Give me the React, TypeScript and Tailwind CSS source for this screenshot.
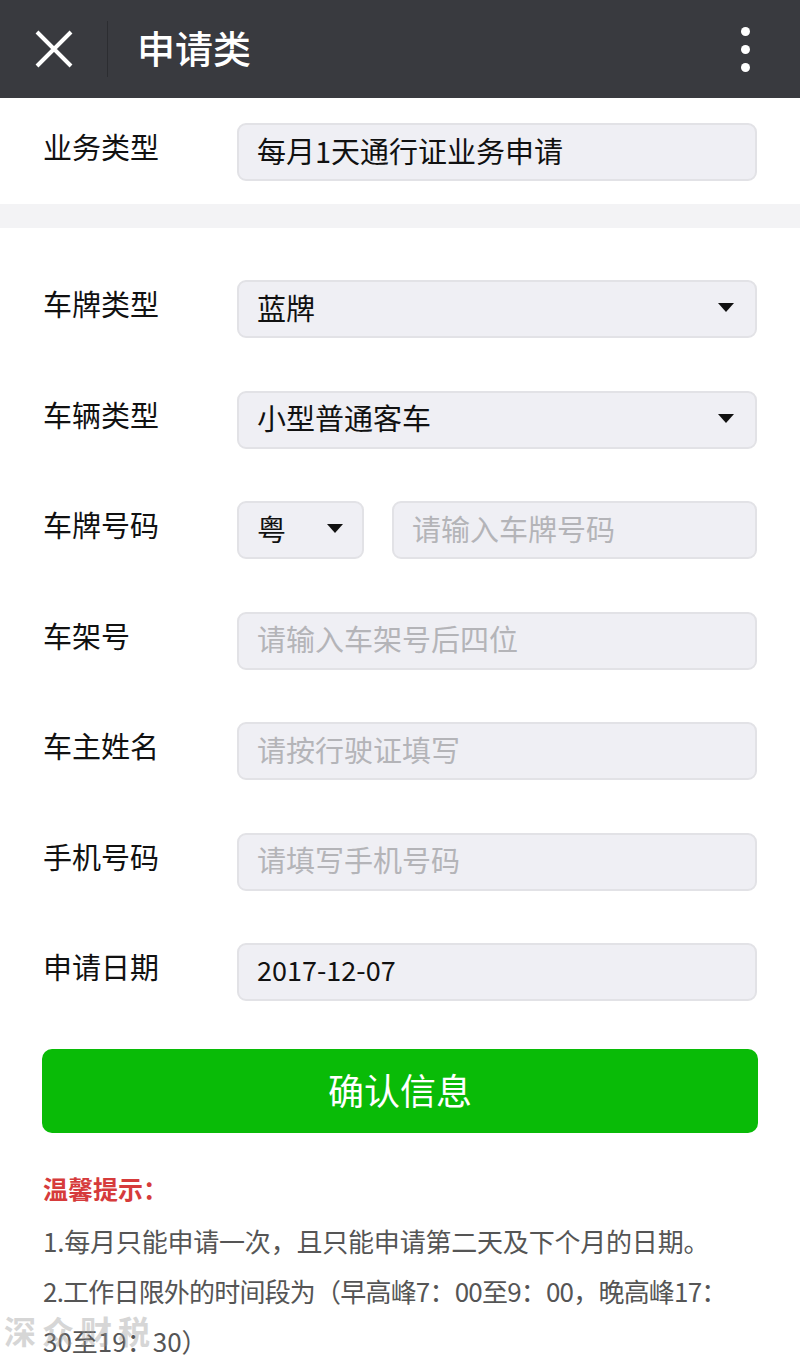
import React from 'react';

const FONT = { fontFamily: '"Noto Sans CJK SC", "Noto Sans", sans-serif' };

const Caret: React.FC = () => (
  <svg width="16" height="9" viewBox="0 0 16 9" className="shrink-0">
    <path d="M0 0h16L8 9z" fill="#111" />
  </svg>
);

const Box: React.FC<{ children: React.ReactNode; className?: string }> = ({ children, className = '' }) => (
  <div
    className={`h-[58px] flex items-center rounded-[9px] border-2 border-[#e2e2e6] bg-[#efeff4] px-[18px] pb-[3px] ${className}`}
  >
    {children}
  </div>
);

const Row: React.FC<{ label: string; children: React.ReactNode }> = ({ label, children }) => (
  <div className="flex items-center">
    <div className="w-[194px] shrink-0 pb-[10px] text-[29px] text-[#111]">{label}</div>
    <div className="flex-1 flex">{children}</div>
  </div>
);

const Placeholder: React.FC<{ text: string }> = ({ text }) => (
  <span className="text-[29px] text-[#b4b4b8]">{text}</span>
);

export default function App() {
  return (
    <div className="relative w-[800px] min-h-[1365px] bg-white overflow-hidden" style={FONT}>
      {/* header */}
      <div className="h-[98px] bg-[#393a3f] flex items-center">
        <div className="w-[107px] flex justify-center">
          <svg width="38" height="38" viewBox="0 0 38 38">
            <path d="M2 2L36 36M36 2L2 36" stroke="#fff" strokeWidth="4" />
          </svg>
        </div>
        <div className="w-px h-[56px] bg-[#2c2d31]" />
        <div className="ml-[29px] text-[38px] font-medium text-white pb-[6px]">申请类</div>
        <div className="ml-auto mr-[50px] flex flex-col gap-[9px]">
          <span className="block w-[9px] h-[9px] rounded-full bg-white" />
          <span className="block w-[9px] h-[9px] rounded-full bg-white" />
          <span className="block w-[9px] h-[9px] rounded-full bg-white" />
        </div>
      </div>

      {/* business type */}
      <div className="px-[43px] pt-[25px] pb-[23px]">
        <Row label="业务类型">
          <Box className="flex-1">
            <span className="text-[29px] text-[#111]">每月1天通行证业务申请</span>
          </Box>
        </Row>
      </div>
      <div className="h-[24px] bg-[#f3f3f5]" />

      {/* form */}
      <div className="px-[43px] pt-[52px] flex flex-col gap-[52.5px]">
        <Row label="车牌类型">
          <Box className="flex-1 justify-between pr-[21px]">
            <span className="text-[29px] text-[#111]">蓝牌</span>
            <Caret />
          </Box>
        </Row>
        <Row label="车辆类型">
          <Box className="flex-1 justify-between pr-[21px]">
            <span className="text-[29px] text-[#111]">小型普通客车</span>
            <Caret />
          </Box>
        </Row>
        <Row label="车牌号码">
          <div className="flex-1 flex gap-[28px]">
            <Box className="w-[127px] justify-between pr-[19px]">
              <span className="text-[29px] text-[#111]">粤</span>
              <Caret />
            </Box>
            <Box className="flex-1">
              <Placeholder text="请输入车牌号码" />
            </Box>
          </div>
        </Row>
        <Row label="车架号">
          <Box className="flex-1">
            <Placeholder text="请输入车架号后四位" />
          </Box>
        </Row>
        <Row label="车主姓名">
          <Box className="flex-1">
            <Placeholder text="请按行驶证填写" />
          </Box>
        </Row>
        <Row label="手机号码">
          <Box className="flex-1">
            <Placeholder text="请填写手机号码" />
          </Box>
        </Row>
        <Row label="申请日期">
          <Box className="flex-1">
            <span className="text-[27px] text-[#111]">2017-12-07</span>
          </Box>
        </Row>
      </div>

      <div className="px-[42px] pt-[48px]">
        <button className="w-full h-[84px] rounded-[10px] bg-[#09bb07] text-white text-[36px] pb-[4px]">
          确认信息
        </button>
      </div>

      {/* tips */}
      <div className="px-[43px] pt-[30px] text-[#555]">
        <div className="text-[25px] font-bold text-[#d63b3b] leading-[50px]">温馨提示：</div>
        <div className="mt-[3px] text-[26px] leading-[50px] whitespace-nowrap tracking-[-0.2px]">
          1.每月只能申请一次，且只能申请第二天及下个月的日期。
        </div>
        <div className="text-[26px] leading-[50px] whitespace-nowrap tracking-[-0.8px]">
          2.工作日限外的时间段为（早高峰7：00至9：00，晚高峰17：
        </div>
        <div className="text-[26px] leading-[50px] whitespace-nowrap">30至19：30）</div>
      </div>

      {/* watermark */}
      <div className="absolute left-[4px] top-[1312px] pointer-events-none opacity-40">
        <div className="text-[32px] font-bold text-[#9a9a9a] tracking-[6px] leading-[36px]">深众财税</div>
      </div>
    </div>
  );
}
